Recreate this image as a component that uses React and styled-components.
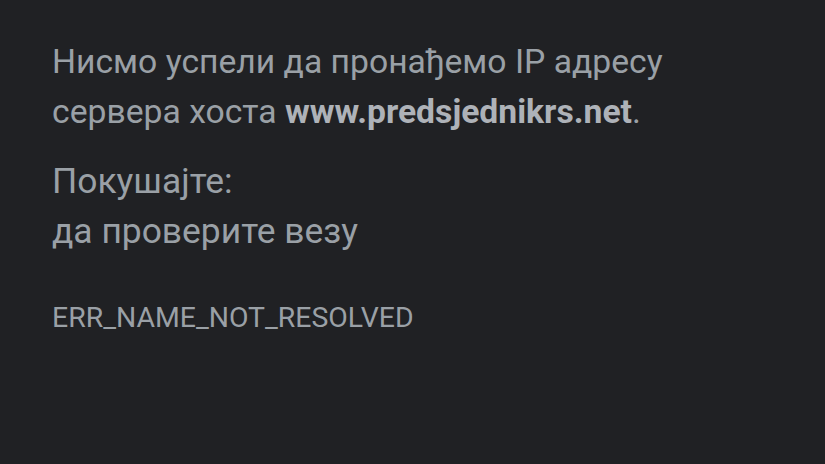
import React from "react";
import styled, { createGlobalStyle } from "styled-components";

const GlobalStyle = createGlobalStyle`
  html, body {
    margin: 0;
    padding: 0;
    background: #202124;
    overflow: hidden;
  }
`;

const Page = styled.div`
  width: 825px;
  height: 464px;
  background: #202124;
  color: #9aa0a6;
  font-family: Roboto, "Noto Sans", sans-serif;
  padding: 0 52px;
  box-sizing: border-box;
  overflow: hidden;
`;

const Heading = styled.h1`
  margin: -39px 0 0;
  font-size: 38px;
  font-weight: 400;
  line-height: 33px;
  color: #e8eaed;
  white-space: nowrap;
`;

const Paragraph = styled.p`
  margin: ${({ $top }) => $top} 0 0;
  font-size: ${({ $size }) => $size};
  line-height: 50px;
`;

const Domain = styled.strong`
  font-weight: 700;
  color: #aeb2b8;
`;

const ErrorCode = styled.div`
  margin-top: 46px;
  font-size: 28.4px;
  line-height: 32px;
  text-transform: uppercase;
`;

export default function App() {
  return (
    <Page>
      <GlobalStyle />
      <Heading>Овај сајт није доступан</Heading>
      <Paragraph $top="43px" $size="33.7px">
        Нисмо успели да пронађемо IP адресу сервера хоста{" "}
        <Domain>www.predsjednikrs.net</Domain>.
      </Paragraph>
      <Paragraph $top="19px" $size="35.4px">
        Покушајте:
        <br />
        да проверите везу
      </Paragraph>
      <ErrorCode>ERR_NAME_NOT_RESOLVED</ErrorCode>
    </Page>
  );
}
